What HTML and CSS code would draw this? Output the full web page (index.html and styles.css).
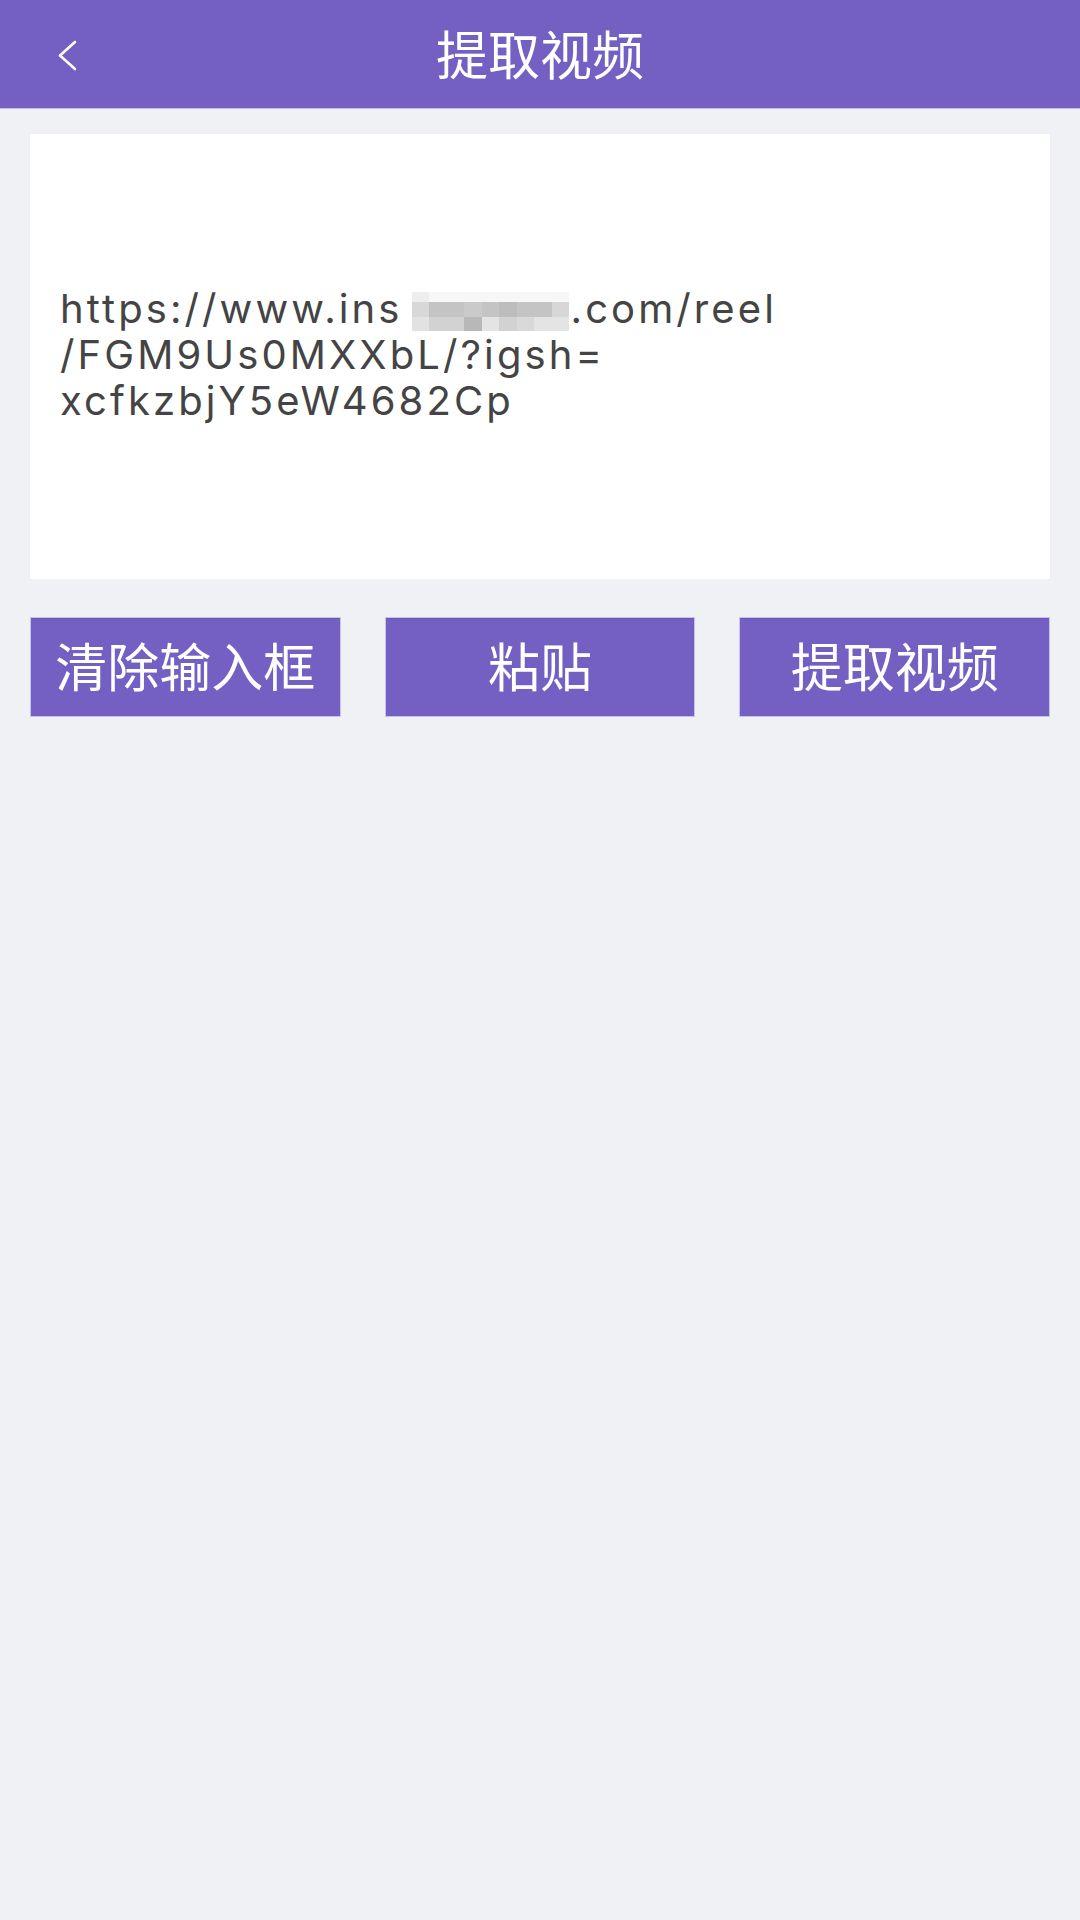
FILE: index.html
```html
<!DOCTYPE html>
<html lang="zh">
<head>
<meta charset="utf-8">
<title>提取视频</title>
<link rel="stylesheet" href="styles.css">
</head>
<body>
<header class="topbar">
  <div class="back">
    <svg width="30" height="36" viewBox="0 0 30 36"><path d="M19 2 L4 15.5 L19 29" fill="none" stroke="#fff" stroke-width="2.6" stroke-linecap="round" stroke-linejoin="round"/></svg>
  </div>
  <h1 class="title">提取视频</h1>
  <div class="spacer"></div>
</header>
<main class="content">
  <section class="card">
    <p class="url">https://www.ins<span class="mosaic"><span class="grid"><i class="a"></i><i class="b"></i><i class="b"></i><i class="b"></i><i class="b"></i><i class="b"></i><i class="b"></i><i class="b"></i><i class="b"></i><i class="c"></i><i class="d"></i><i class="d"></i><i class="e"></i><i class="d"></i><i class="f"></i><i class="d"></i><i class="d"></i><i class="g"></i><i class="h"></i><i class="i"></i><i class="i"></i><i class="j"></i><i class="k"></i><i class="i"></i><i class="l"></i><i class="k"></i><i class="k"></i></span></span>.com/reel<br>/FGM9Us0MXXbL/?igsh=<br>xcfkzbjY5eW4682Cp</p>
  </section>
  <div class="actions">
    <button class="btn">清除输入框</button>
    <button class="btn">粘贴</button>
    <button class="btn">提取视频</button>
  </div>
</main>
</body>
</html>
```
FILE: styles.css
```css
* { box-sizing: border-box; }
html, body {
  margin: 0;
  padding: 0;
}
body {
  width: 1080px;
  height: 1920px;
  background: #f0f1f5;
  font-family: "Noto Sans CJK SC", "Noto Sans", sans-serif;
  overflow: hidden;
}
.topbar {
  height: 109px;
  background: #7460c3;
  border-bottom: 1px solid #c6bdea;
  display: grid;
  grid-template-columns: 120px 1fr 120px;
  align-items: center;
}
.back {
  padding-left: 56px;
  padding-top: 8px;
  display: flex;
  align-items: center;
}
.back svg { display: block; }
.title {
  margin: 0;
  text-align: center;
  color: #ffffff;
  font-size: 52px;
  font-weight: 400;
  line-height: 1;
  padding-bottom: 2px;
}
.content {
  padding: 25px 30px 0;
}
.card {
  height: 445px;
  background: #ffffff;
  display: flex;
  align-items: center;
  padding: 0 30px;
}
.url {
  margin: 0;
  font-family: Inter, "Noto Sans", sans-serif;
  font-size: 40px;
  line-height: 46px;
  letter-spacing: 3.1px;
  color: #444444;
  padding-bottom: 4px;
}
.mosaic {
  display: inline-block;
  overflow: hidden;
  width: 158px;
  height: 39px;
  vertical-align: -8px;
  margin-left: 9px;
  margin-right: 1px;
  letter-spacing: 0;
}
.grid {
  display: grid;
  grid-template-columns: repeat(9, 17.5px);
  grid-template-rows: 10px 15px 14px;
  width: 158px;
  height: 39px;
}
.grid i { display: block; }
.grid .a { background: #eeeeee; }
.grid .b { background: #f7f7f7; }
.grid .c { background: #d8d8d8; }
.grid .d { background: #c4c4c4; }
.grid .e { background: #cacaca; }
.grid .f { background: #bdbdbd; }
.grid .g { background: #d7d7d7; }
.grid .h { background: #e2e2e2; }
.grid .i { background: #d2d2d2; }
.grid .j { background: #b8b8b8; }
.grid .k { background: #e4e4e4; }
.grid .l { background: #d9d9d9; }
.actions {
  margin-top: 38px;
  display: grid;
  grid-template-columns: repeat(3, 1fr);
  column-gap: 44px;
}
.btn {
  height: 100px;
  margin: 0;
  padding: 0;
  background: #7460c3;
  border: 1px solid #c9c2ea;
  box-shadow: inset 0 1px 0 #6a56b8;
  color: #ffffff;
  font-family: "Noto Sans CJK SC", "Noto Sans", sans-serif;
  font-size: 52px;
  font-weight: 400;
  line-height: 1;
  padding-bottom: 4px;
}
```
